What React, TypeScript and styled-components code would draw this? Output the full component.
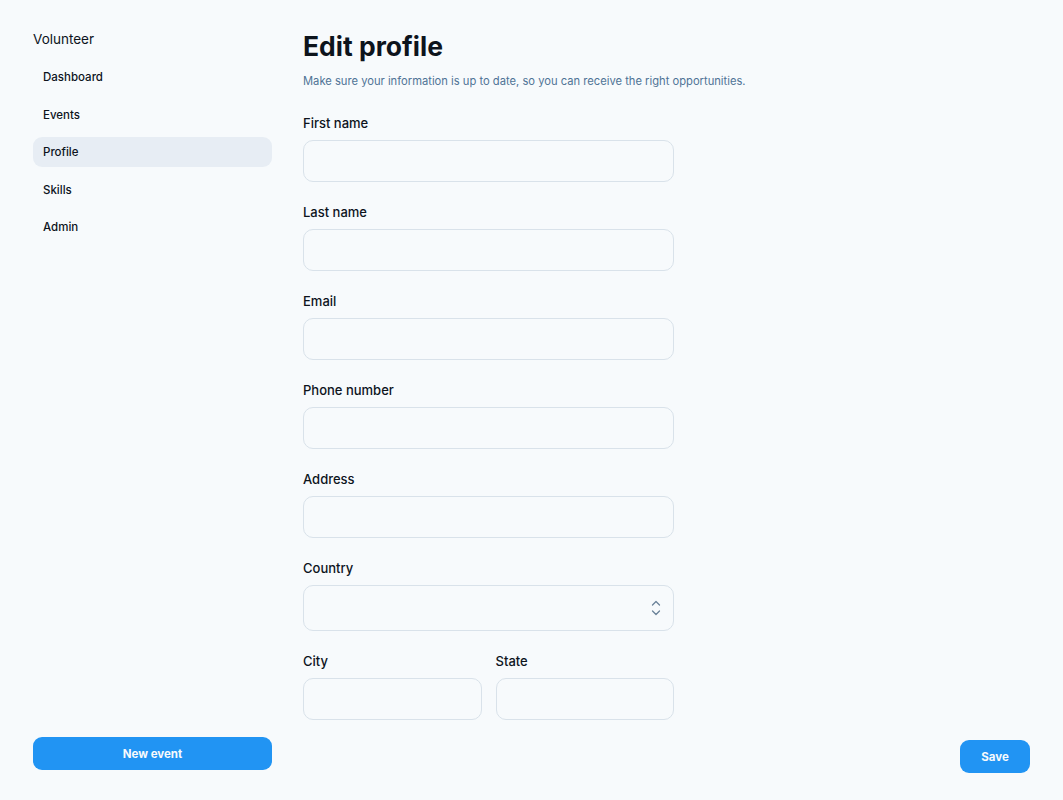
import React from "react";
import styled, { createGlobalStyle } from "styled-components";

const Global = createGlobalStyle`
  html, body { margin: 0; padding: 0; background: #f7fafc; }
  body { font-family: Inter, "Noto Sans", sans-serif; color: #0d141c; }
  * { box-sizing: border-box; }
`;

const Page = styled.div`
  display: flex;
  width: 1063px;
  height: 800px;
  background: #f7fafc;
`;

const Sidebar = styled.aside`
  width: 239px;
  margin-left: 33px;
  padding: 30px 0 30px;
  display: flex;
  flex-direction: column;
  justify-content: space-between;
`;

const Brand = styled.div`
  font-size: 13.5px;
  font-weight: 400;
  color: #0d141c;
  line-height: 18px;
  margin-bottom: 14px;
`;

const Nav = styled.nav`
  display: flex;
  flex-direction: column;
  gap: 7.5px;
`;

const NavItem = styled.a<{ $active?: boolean }>`
  display: flex;
  align-items: center;
  height: 30px;
  padding: 0 10px;
  border-radius: 9px;
  font-size: 11.5px;
  font-weight: 500;
  color: #0d141c;
  background: ${(p) => (p.$active ? "#e7edf4" : "transparent")};
  text-decoration: none;
`;

const PrimaryButton = styled.button<{ $wide?: boolean }>`
  height: 33px;
  width: ${(p) => (p.$wide ? "100%" : "70px")};
  border: none;
  border-radius: 9px;
  background: #2194f3;
  color: #f7fafc;
  font-family: inherit;
  font-size: 11.5px;
  font-weight: 700;
  cursor: pointer;
`;

const Main = styled.main`
  flex: 1;
  padding: 30px 0 0 31px;
  display: flex;
  flex-direction: column;
`;

const Title = styled.h1`
  margin: 0;
  font-size: 26.5px;
  font-weight: 700;
  line-height: 32px;
  color: #0d141c;
`;

const Subtitle = styled.p`
  margin: 11px 0 0;
  font-size: 11.2px;
  line-height: 16px;
  color: #4f7396;
`;

const Form = styled.div`
  width: 371px;
  margin-top: 25px;
  display: flex;
  flex-direction: column;
  gap: 21px;
`;

const Field = styled.label`
  display: flex;
  flex-direction: column;
  flex: 1;
`;

const Label = styled.span`
  font-size: 13px;
  font-weight: 500;
  line-height: 18px;
  color: #0d141c;
  margin-bottom: 8px;
`;

const Input = styled.div<{ $tall?: boolean }>`
  position: relative;
  height: ${(p) => (p.$tall ? "46px" : "42px")};
  border: 1px solid #d9e2ea;
  border-radius: 10px;
  background: #f7fafc;
`;

const Row = styled.div`
  display: flex;
  gap: 14px;
`;

const Chevrons = styled.svg`
  position: absolute;
  right: 11px;
  top: 50%;
  transform: translateY(-50%);
`;

const Footer = styled.div`
  display: flex;
  justify-content: flex-end;
  padding: 0 33px 27px 0;
  align-self: flex-end;
`;

const Content = styled.div`
  display: flex;
  flex: 1;
  justify-content: space-between;
`;

const fields = ["First name", "Last name", "Email", "Phone number", "Address"];

export default function App() {
  return (
    <>
      <Global />
      <Page>
        <Sidebar>
          <div>
            <Brand>Volunteer</Brand>
            <Nav>
              <NavItem>Dashboard</NavItem>
              <NavItem>Events</NavItem>
              <NavItem $active>Profile</NavItem>
              <NavItem>Skills</NavItem>
              <NavItem>Admin</NavItem>
            </Nav>
          </div>
          <PrimaryButton $wide>New event</PrimaryButton>
        </Sidebar>
        <Content>
          <Main>
            <Title>Edit profile</Title>
            <Subtitle>
              Make sure your information is up to date, so you can receive the right opportunities.
            </Subtitle>
            <Form>
              {fields.map((f) => (
                <Field key={f}>
                  <Label>{f}</Label>
                  <Input />
                </Field>
              ))}
              <Field>
                <Label>Country</Label>
                <Input $tall>
                  <Chevrons width="12" height="20" viewBox="0 0 12 20" fill="none" stroke="#6b8299" strokeWidth="1.3" strokeLinecap="round" strokeLinejoin="round">
                    <path d="M2.5 7 L6 3.5 L9.5 7" />
                    <path d="M2.5 13 L6 16.5 L9.5 13" />
                  </Chevrons>
                </Input>
              </Field>
              <Row>
                <Field>
                  <Label>City</Label>
                  <Input />
                </Field>
                <Field>
                  <Label>State</Label>
                  <Input />
                </Field>
              </Row>
            </Form>
          </Main>
          <Footer>
            <PrimaryButton>Save</PrimaryButton>
          </Footer>
        </Content>
      </Page>
    </>
  );
}
